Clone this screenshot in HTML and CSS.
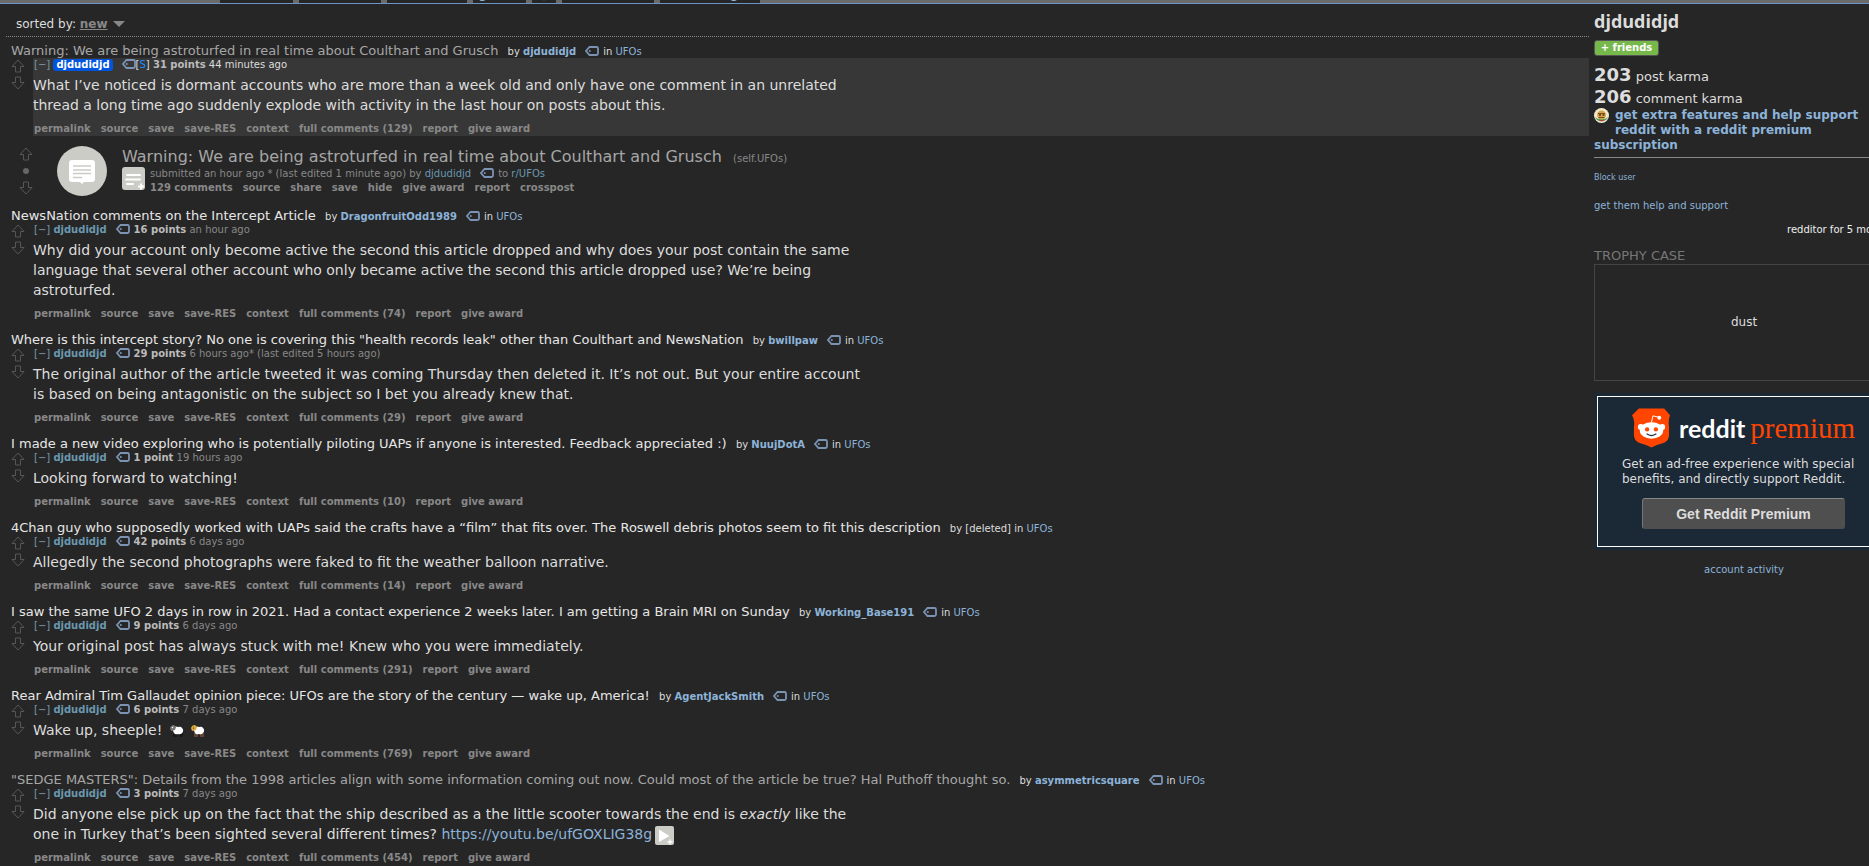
FILE: index.html
```html
<!DOCTYPE html>
<html lang="en">
<head>
<meta charset="utf-8">
<title>overview for djdudidjd</title>
<link rel="stylesheet" href="styles.css">
</head>
<body>
<svg class="sprite" aria-hidden="true">
  <symbol id="up" viewBox="0 0 14 14"><path d="M7 1 L13 7.500 H9.500 V13 H4.500 V7.500 H1 Z" fill="none" stroke="#565656"/></symbol>
  <symbol id="down" viewBox="0 0 14 14"><path d="M7 13 L13 6.500 H9.500 V1 H4.500 V6.500 H1 Z" fill="none" stroke="#565656"/></symbol>
  <symbol id="tag" viewBox="0 0 14 10"><path d="M4.500 1 H11.500 Q13 1 13 2.500 V7.500 Q13 9 11.500 9 H4.500 L1 5 Z" fill="none" stroke="#7b93b3" stroke-width="1.800"/><circle cx="4.800" cy="5" r="1" fill="#7b93b3"/></symbol>
</svg>

<header class="topbar">
  <nav class="tabs">
    <a class="tab current" href="#">overview</a>
    <a class="tab t1" href="#">comments</a>
    <a class="tab t2" href="#">submitted</a>
    <a class="tab t3" href="#">gilded</a>
    <a class="tab t4" href="#">@</a>
    <a class="tab t5" href="#">saved - RES</a>
    <a class="tab t6" href="#">show images</a>
  </nav>
</header>

<div class="page">
<main class="content">
  <div class="sortbar">sorted by: <button class="sort" type="button">new</button><svg class="caret" viewBox="0 0 12 6"><path d="M0 0H12L6 6Z" fill="#888"/></svg></div>

  <article class="thing">
    <p class="parent"><a class="title visited" href="#">Warning: We are being astroturfed in real time about Coulthart and Grusch</a> <span class="by">by <a class="author" href="#">djdudidjd</a><svg class="tag"><use href="#tag"/></svg>in <a href="#">UFOs</a></span></p>
    <div class="comment">
      <div class="votes"><button type="button" aria-label="upvote"><svg><use href="#up"/></svg></button><button type="button" aria-label="downvote"><svg><use href="#down"/></svg></button></div>
      <div class="entry op">
        <p class="tagline"><a class="fold" href="#">[−]</a> <a class="author submitter" href="#">djdudidjd</a><svg class="tag"><use href="#tag"/></svg><span class="s">[<a href="#">S</a>]</span> <b>31 points</b> <time>44 minutes ago</time></p>
        <div class="md">What I’ve noticed is dormant accounts who are more than a week old and only have one comment in an unrelated thread a long time ago suddenly explode with activity in the last hour on posts about this.</div>
        <div class="actions"><a href="#">permalink</a><a href="#">source</a><a href="#">save</a><a href="#">save-RES</a><a href="#">context</a><a href="#">full comments (129)</a><a href="#">report</a><a href="#">give award</a></div>
      </div>
    </div>
  </article>

  <article class="link">
    <div class="votes"><button type="button" aria-label="upvote"><svg><use href="#up"/></svg></button><span class="dot"></span><button type="button" aria-label="downvote"><svg><use href="#down"/></svg></button></div>
    <a class="thumb" href="#" aria-label="self post"><svg viewBox="0 0 50 50"><circle cx="25" cy="25" r="25" fill="#cbccc6"/><path d="M15 14h20q3 0 3 3v16q0 3-3 3h-8l-2 2-2-2h-8q-3 0-3-3V17q0-3 3-3z" fill="#fff"/><path d="M16 20h18M16 24h18M16 27.500h18M16 31.500h9" stroke="#cbccc6" stroke-width="1.400"/></svg></a>
    <div class="linkbody">
      <p class="linkhead"><a class="linktitle" href="#">Warning: We are being astroturfed in real time about Coulthart and Grusch</a> <span class="domain">(self.UFOs)</span></p>
      <div class="linkrow">
        <button class="expando" type="button" aria-label="expand"><svg viewBox="0 0 23 23"><rect width="23" height="23" rx="3" fill="#cbccc6"/><path d="M5 8h13M4 12.500h14M5 17h6" stroke="#fff" stroke-width="2" stroke-linecap="round"/><path d="M16 19.500h6M19 16.500v6" stroke="#fff" stroke-width="2"/></svg></button>
        <div class="linkmeta">
          <p class="tagline">submitted an hour ago * (last edited 1 minute ago) by <a href="#">djdudidjd</a><svg class="tag"><use href="#tag"/></svg>to <a href="#">r/UFOs</a></p>
          <div class="actions"><a href="#">129 comments</a><a href="#">source</a><a href="#">share</a><a href="#">save</a><a href="#">hide</a><a href="#">give award</a><a href="#">report</a><a href="#">crosspost</a></div>
        </div>
      </div>
    </div>
  </article>

  <article class="thing">
    <p class="parent"><a class="title" href="#">NewsNation comments on the Intercept Article</a> <span class="by">by <a class="author" href="#">DragonfruitOdd1989</a><svg class="tag"><use href="#tag"/></svg>in <a href="#">UFOs</a></span></p>
    <div class="comment">
      <div class="votes"><button type="button" aria-label="upvote"><svg><use href="#up"/></svg></button><button type="button" aria-label="downvote"><svg><use href="#down"/></svg></button></div>
      <div class="entry">
        <p class="tagline"><a class="fold" href="#">[−]</a> <a class="author" href="#">djdudidjd</a><svg class="tag"><use href="#tag"/></svg><b>16 points</b> <time>an hour ago</time></p>
        <div class="md">Why did your account only become active the second this article dropped and why does your post contain the same language that several other account who only became active the second this article dropped use? We’re being astroturfed.</div>
        <div class="actions"><a href="#">permalink</a><a href="#">source</a><a href="#">save</a><a href="#">save-RES</a><a href="#">context</a><a href="#">full comments (74)</a><a href="#">report</a><a href="#">give award</a></div>
      </div>
    </div>
  </article>

  <article class="thing">
    <p class="parent"><a class="title" href="#">Where is this intercept story? No one is covering this "health records leak" other than Coulthart and NewsNation</a> <span class="by">by <a class="author" href="#">bwillpaw</a><svg class="tag"><use href="#tag"/></svg>in <a href="#">UFOs</a></span></p>
    <div class="comment">
      <div class="votes"><button type="button" aria-label="upvote"><svg><use href="#up"/></svg></button><button type="button" aria-label="downvote"><svg><use href="#down"/></svg></button></div>
      <div class="entry">
        <p class="tagline"><a class="fold" href="#">[−]</a> <a class="author" href="#">djdudidjd</a><svg class="tag"><use href="#tag"/></svg><b>29 points</b> <time>6 hours ago* (last edited 5 hours ago)</time></p>
        <div class="md">The original author of the article tweeted it was coming Thursday then deleted it. It’s not out. But your entire account is based on being antagonistic on the subject so I bet you already knew that.</div>
        <div class="actions"><a href="#">permalink</a><a href="#">source</a><a href="#">save</a><a href="#">save-RES</a><a href="#">context</a><a href="#">full comments (29)</a><a href="#">report</a><a href="#">give award</a></div>
      </div>
    </div>
  </article>

  <article class="thing">
    <p class="parent"><a class="title" href="#">I made a new video exploring who is potentially piloting UAPs if anyone is interested. Feedback appreciated :)</a> <span class="by">by <a class="author" href="#">NuujDotA</a><svg class="tag"><use href="#tag"/></svg>in <a href="#">UFOs</a></span></p>
    <div class="comment">
      <div class="votes"><button type="button" aria-label="upvote"><svg><use href="#up"/></svg></button><button type="button" aria-label="downvote"><svg><use href="#down"/></svg></button></div>
      <div class="entry">
        <p class="tagline"><a class="fold" href="#">[−]</a> <a class="author" href="#">djdudidjd</a><svg class="tag"><use href="#tag"/></svg><b>1 point</b> <time>19 hours ago</time></p>
        <div class="md">Looking forward to watching!</div>
        <div class="actions"><a href="#">permalink</a><a href="#">source</a><a href="#">save</a><a href="#">save-RES</a><a href="#">context</a><a href="#">full comments (10)</a><a href="#">report</a><a href="#">give award</a></div>
      </div>
    </div>
  </article>

  <article class="thing">
    <p class="parent"><a class="title" href="#">4Chan guy who supposedly worked with UAPs said the crafts have a “film” that fits over. The Roswell debris photos seem to fit this description</a> <span class="by">by [deleted] in <a href="#">UFOs</a></span></p>
    <div class="comment">
      <div class="votes"><button type="button" aria-label="upvote"><svg><use href="#up"/></svg></button><button type="button" aria-label="downvote"><svg><use href="#down"/></svg></button></div>
      <div class="entry">
        <p class="tagline"><a class="fold" href="#">[−]</a> <a class="author" href="#">djdudidjd</a><svg class="tag"><use href="#tag"/></svg><b>42 points</b> <time>6 days ago</time></p>
        <div class="md">Allegedly the second photographs were faked to fit the weather balloon narrative.</div>
        <div class="actions"><a href="#">permalink</a><a href="#">source</a><a href="#">save</a><a href="#">save-RES</a><a href="#">context</a><a href="#">full comments (14)</a><a href="#">report</a><a href="#">give award</a></div>
      </div>
    </div>
  </article>

  <article class="thing">
    <p class="parent"><a class="title" href="#">I saw the same UFO 2 days in row in 2021. Had a contact experience 2 weeks later. I am getting a Brain MRI on Sunday</a> <span class="by">by <a class="author" href="#">Working_Base191</a><svg class="tag"><use href="#tag"/></svg>in <a href="#">UFOs</a></span></p>
    <div class="comment">
      <div class="votes"><button type="button" aria-label="upvote"><svg><use href="#up"/></svg></button><button type="button" aria-label="downvote"><svg><use href="#down"/></svg></button></div>
      <div class="entry">
        <p class="tagline"><a class="fold" href="#">[−]</a> <a class="author" href="#">djdudidjd</a><svg class="tag"><use href="#tag"/></svg><b>9 points</b> <time>6 days ago</time></p>
        <div class="md">Your original post has always stuck with me! Knew who you were immediately.</div>
        <div class="actions"><a href="#">permalink</a><a href="#">source</a><a href="#">save</a><a href="#">save-RES</a><a href="#">context</a><a href="#">full comments (291)</a><a href="#">report</a><a href="#">give award</a></div>
      </div>
    </div>
  </article>

  <article class="thing">
    <p class="parent"><a class="title" href="#">Rear Admiral Tim Gallaudet opinion piece: UFOs are the story of the century — wake up, America!</a> <span class="by">by <a class="author" href="#">AgentJackSmith</a><svg class="tag"><use href="#tag"/></svg>in <a href="#">UFOs</a></span></p>
    <div class="comment">
      <div class="votes"><button type="button" aria-label="upvote"><svg><use href="#up"/></svg></button><button type="button" aria-label="downvote"><svg><use href="#down"/></svg></button></div>
      <div class="entry">
        <p class="tagline"><a class="fold" href="#">[−]</a> <a class="author" href="#">djdudidjd</a><svg class="tag"><use href="#tag"/></svg><b>6 points</b> <time>7 days ago</time></p>
        <div class="md">Wake up, sheeple!
          <svg class="sheep" viewBox="0 0 15 14"><path d="M5 9v4M7 9v4M11 9v4M13 9v4" stroke="#111" stroke-width="1.200"/><path d="M5 3q2-1 4 0 3-1 4 1 2 2 .5 4.500Q12 11 9 10q-3 1-4-1Q3 6 5 3z" fill="#fff"/><path d="M1 4q1-3 4-3l2 2-1 3-4 1z" fill="#777"/><circle cx="3.500" cy="3.500" r=".7" fill="#fff"/></svg>
          <svg class="sheep" viewBox="0 0 15 14"><path d="M5 9v4M7 9v4M11 9v4M13 9v4" stroke="#8a5a3c" stroke-width="1.200"/><path d="M5 3q2-1 4 0 3-1 4 1 2 2 .5 4.500Q12 11 9 10q-3 1-4-1Q3 6 5 3z" fill="#fff"/><path d="M1 4q1-3 4-3l2 2-1 3-4 1z" fill="#e0a93c"/><circle cx="3.500" cy="4" r=".6" fill="#222"/></svg></div>
        <div class="actions"><a href="#">permalink</a><a href="#">source</a><a href="#">save</a><a href="#">save-RES</a><a href="#">context</a><a href="#">full comments (769)</a><a href="#">report</a><a href="#">give award</a></div>
      </div>
    </div>
  </article>

  <article class="thing">
    <p class="parent"><a class="title visited" href="#">"SEDGE MASTERS": Details from the 1998 articles align with some information coming out now. Could most of the article be true? Hal Puthoff thought so.</a> <span class="by">by <a class="author" href="#">asymmetricsquare</a><svg class="tag"><use href="#tag"/></svg>in <a href="#">UFOs</a></span></p>
    <div class="comment">
      <div class="votes"><button type="button" aria-label="upvote"><svg><use href="#up"/></svg></button><button type="button" aria-label="downvote"><svg><use href="#down"/></svg></button></div>
      <div class="entry">
        <p class="tagline"><a class="fold" href="#">[−]</a> <a class="author" href="#">djdudidjd</a><svg class="tag"><use href="#tag"/></svg><b>3 points</b> <time>7 days ago</time></p>
        <div class="md">Did anyone else pick up on the fact that the ship described as a the little scooter towards the end is <em>exactly</em> like the one in Turkey that’s been sighted several different times? <a href="#">https://youtu.be/ufGOXLIG38g</a><button class="play" type="button" aria-label="play video"><svg viewBox="0 0 19 19"><rect width="19" height="19" rx="2" fill="#cbccc6"/><path d="M4 3.500L14.500 10 4 16z" fill="#fff"/><path d="M12.500 16h5M15 13.500v5" stroke="#fff" stroke-width="1.300"/></svg></button></div>
        <div class="actions"><a href="#">permalink</a><a href="#">source</a><a href="#">save</a><a href="#">save-RES</a><a href="#">context</a><a href="#">full comments (454)</a><a href="#">report</a><a href="#">give award</a></div>
      </div>
    </div>
  </article>
</main>

<aside class="side">
  <h1>djdudidjd</h1>
  <button class="friends" type="button">+ friends</button>
  <p class="karma"><b>203</b> post karma</p>
  <p class="karma"><b>206</b> comment karma</p>
  <a class="gold" href="#"><svg class="goldicon" viewBox="0 0 15 30"><circle cx="7.500" cy="7.500" r="7.500" fill="#f2ead0"/><path d="M1 9a7 7 0 0 0 13 0l-3 2H4z" fill="#4f9a5c"/><circle cx="7.500" cy="7" r="4.500" fill="#d9a54a"/><path d="M4 5.500h7M4.500 9.500h6" stroke="#7a4a22"/><path d="M5 7h2M8.500 7h2" stroke="#5a3015" stroke-width="1.500"/><path d="M5.500 12.500h4" stroke="#c33"/></svg>get extra features and help support reddit with a reddit premium subscription</a>
  <hr>
  <a class="block" href="#">Block user</a>
  <a class="help" href="#">get them help and support</a>
  <p class="age">redditor for 5 months</p>
  <h2>TROPHY CASE</h2>
  <div class="trophies">dust</div>
  <section class="ad">
    <div class="adinner">
      <div class="logo"><svg viewBox="0 0 40 40"><path d="M7 0h26l6 7q-2 5-1 12v8q0 6-5 8-8 2-13 5-5-3-13-5-5-2-5-8v-8Q3 12 0 7z" fill="#ff4500"/><ellipse cx="20" cy="22.500" rx="12" ry="8.500" fill="#fff"/><circle cx="9" cy="19" r="3" fill="#fff"/><circle cx="31" cy="19" r="3" fill="#fff"/><path d="M20 14l1.500-6.500 6 1.500" fill="none" stroke="#fff"/><circle cx="28" cy="9.500" r="2" fill="#fff"/><circle cx="15.500" cy="21.500" r="2.200" fill="#ff4500"/><circle cx="24.500" cy="21.500" r="2.200" fill="#ff4500"/><path d="M15 26q5 3.500 10 0" fill="none" stroke="#1b2836" stroke-width="1.200"/></svg><span class="word">reddit</span><span class="premium">premium</span></div>
      <p>Get an ad-free experience with special benefits, and directly support Reddit.</p>
      <button class="buy" type="button">Get Reddit Premium</button>
    </div>
  </section>
  <a class="activity" href="#">account activity</a>
</aside>
</div>
</body>
</html>
```
FILE: styles.css
```css
* { box-sizing: border-box; }
html { overflow: hidden; background: #262626; }
body {
  margin: 0;
  overflow: hidden;
  background: #262626;
  color: #ddd;
  font-family: Verdana, "DejaVu Sans", sans-serif;
  font-size: 10px;
}
p, h1, h2 { margin: 0; }
a { color: #8cb3d9; text-decoration: none; }
button { padding: 0; border: 0; background: none; font-family: inherit; cursor: pointer; }
svg { display: block; }
.sprite { position: absolute; width: 0; height: 0; }

/* lower edge of the user tab strip */
.topbar { height: 4px; background: #6b6b6b; border-bottom: 1px solid #6b93c4; }
.tabs { display: flex; gap: 6px; height: 3px; padding-left: 220px; overflow: hidden; align-items: flex-end; }
.tab {
  flex: none;
  height: 16px;
  background: #262626;
  color: #8cb3d9;
  font-size: 12px;
  font-weight: bold;
  line-height: 15px;
  text-align: center;
}
.tab.current { width: 73px; color: #0d2230; }
.t1 { width: 82px; }
.t2 { width: 80px; }
.t3 { width: 53px; }
.t4 { width: 24px; }
.t5 { width: 92px; }
.t6 { width: 100px; }

.page { display: flex; gap: 5px; }
.content { flex: 1; min-width: 0; padding-left: 6px; }

.sortbar {
  display: flex;
  align-items: center;
  height: 33px;
  padding: 7px 0 0 10px;
  border-bottom: 1px dotted #888;
  font-size: 12px;
  white-space: pre;
}
.sort { color: #888; font-size: 12px; font-weight: bold; text-decoration: underline; }
.caret { width: 12px; height: 6px; margin-left: 5px; }

.thing { padding-left: 5px; margin-bottom: 10px; }
.sortbar + .thing { margin-top: 5px; }
.parent { height: 16px; line-height: 18px; white-space: nowrap; }
.title { color: #e6e6e6; font-size: 13px; }
.title.visited { color: #a6a6a6; }
.by { margin-left: 6px; }
.author { font-weight: bold; }
.tag { display: inline-block; width: 14px; height: 10px; margin: 0 4px 0 9px; vertical-align: -1px; }

.comment { display: flex; gap: 8px; }
.votes { display: flex; flex-direction: column; flex: none; }
.votes svg { width: 14px; height: 14px; }
.comment .votes { gap: 3px; padding-top: 1px; }
.entry { flex: 1; min-width: 0; padding-bottom: 1px; }
.op { background: #373737; }
.tagline { height: 13px; padding-left: 1px; color: #888; line-height: 13px; white-space: nowrap; }
.tagline a { color: #6a98af; }
.tagline .fold { color: #7a99a8; }
.tagline b { color: #bbb; }
.op time, .s { color: #ddd; }
.tagline .s a { color: #1e90ff; }
.tagline .submitter { padding: 0 3px 1px; border-radius: 3px; background: #0055df; color: #fff; }
.op .tag { margin-right: 0; }
.md { max-width: 840px; margin: 4px 0 8px; color: #ddd; font-size: 14px; line-height: 20px; }
.actions { display: flex; gap: 10px; height: 12px; padding-left: 1px; line-height: 12px; font-weight: bold; white-space: nowrap; }
.actions a { color: #888; }
.sheep { display: inline-block; width: 15px; height: 14px; margin-left: 2px; vertical-align: -3px; }
.play { width: 19px; height: 19px; margin-left: 3px; vertical-align: -6px; }
.md:has(.play) { height: 40px; }

.link { display: flex; height: 51px; margin-bottom: 10px; padding-left: 13px; }
.link .votes { align-items: center; gap: 4px; padding-top: 1px; }
.dot { width: 6px; height: 6px; margin: 3px 0; border-radius: 50%; background: #666; }
.thumb { flex: none; width: 50px; height: 50px; margin: 0 15px 0 24px; }
.linkbody { flex: 1; min-width: 0; }
.linkhead { height: 21px; line-height: 21px; white-space: nowrap; }
.linktitle { color: #a6a6a6; font-size: 16px; }
.domain { margin-left: 8px; color: #888; }
.linkrow { display: flex; gap: 4px; }
.expando { width: 23px; height: 23px; }
.linkmeta .actions { margin-top: 2px; }

.side { flex: none; width: 300px; margin-right: -25px; padding-top: 5px; }
h1 { height: 24px; color: #ddd; font: bold 18px/24px "Open Sans", sans-serif; }
.friends {
  display: block;
  width: 65px;
  height: 16px;
  margin: 7px 0 8px;
  border: 1px solid #555;
  border-radius: 3px;
  background: #76b84a;
  color: #fff;
  font-size: 10px;
  font-weight: bold;
  line-height: 14px;
}
.karma { height: 22px; font-size: 13px; line-height: 22px; white-space: nowrap; }
.karma b { font-size: 18px; }
.gold { display: block; max-width: 270px; font-size: 12px; font-weight: bold; line-height: 15px; }
.goldicon { float: left; width: 15px; height: 30px; margin-right: 6px; }
hr { height: 1px; margin: 4px 0 14px; border: 0; background: #888; }
.block, .help { display: block; }
.block { font-size: 8px; line-height: 12px; }
.help { margin-top: 16px; line-height: 12px; }
.age { margin-top: 12px; line-height: 12px; text-align: right; color: #eee; }
h2 { margin-top: 12px; color: #777; font-size: 13px; font-weight: normal; line-height: 16px; }
.trophies {
  display: flex;
  align-items: center;
  justify-content: center;
  height: 117px;
  padding-bottom: 2px;
  border: 1px solid #444;
  font-size: 12px;
}
.ad { margin-top: 12px; padding: 3px; background: #1b2836; }
.adinner { padding: 11px 20px 17px 24px; border: 1px solid #fff; }
.logo { display: flex; align-items: center; height: 40px; padding-left: 10px; }
.logo svg { flex: none; width: 39px; height: 40px; margin-right: 8px; }
.word { color: #fff; font: bold 25px/40px Lato, sans-serif; }
.premium { margin-left: 5px; color: #ff4500; font: 29px/40px "Liberation Serif", serif; }
.ad p { margin-top: 9px; font-size: 12px; line-height: 15px; }
.buy {
  display: block;
  width: 203px;
  height: 31px;
  margin: 11px 0 0 20px;
  border: 1px solid #4f4f4f;
  border-top-color: #888;
  border-left-color: #777;
  border-radius: 3px;
  background: #4f4f4f;
  color: #ddd;
  font: bold 14px "Liberation Sans", sans-serif;
}
.activity { display: block; margin-top: 14px; line-height: 12px; text-align: center; }
```
